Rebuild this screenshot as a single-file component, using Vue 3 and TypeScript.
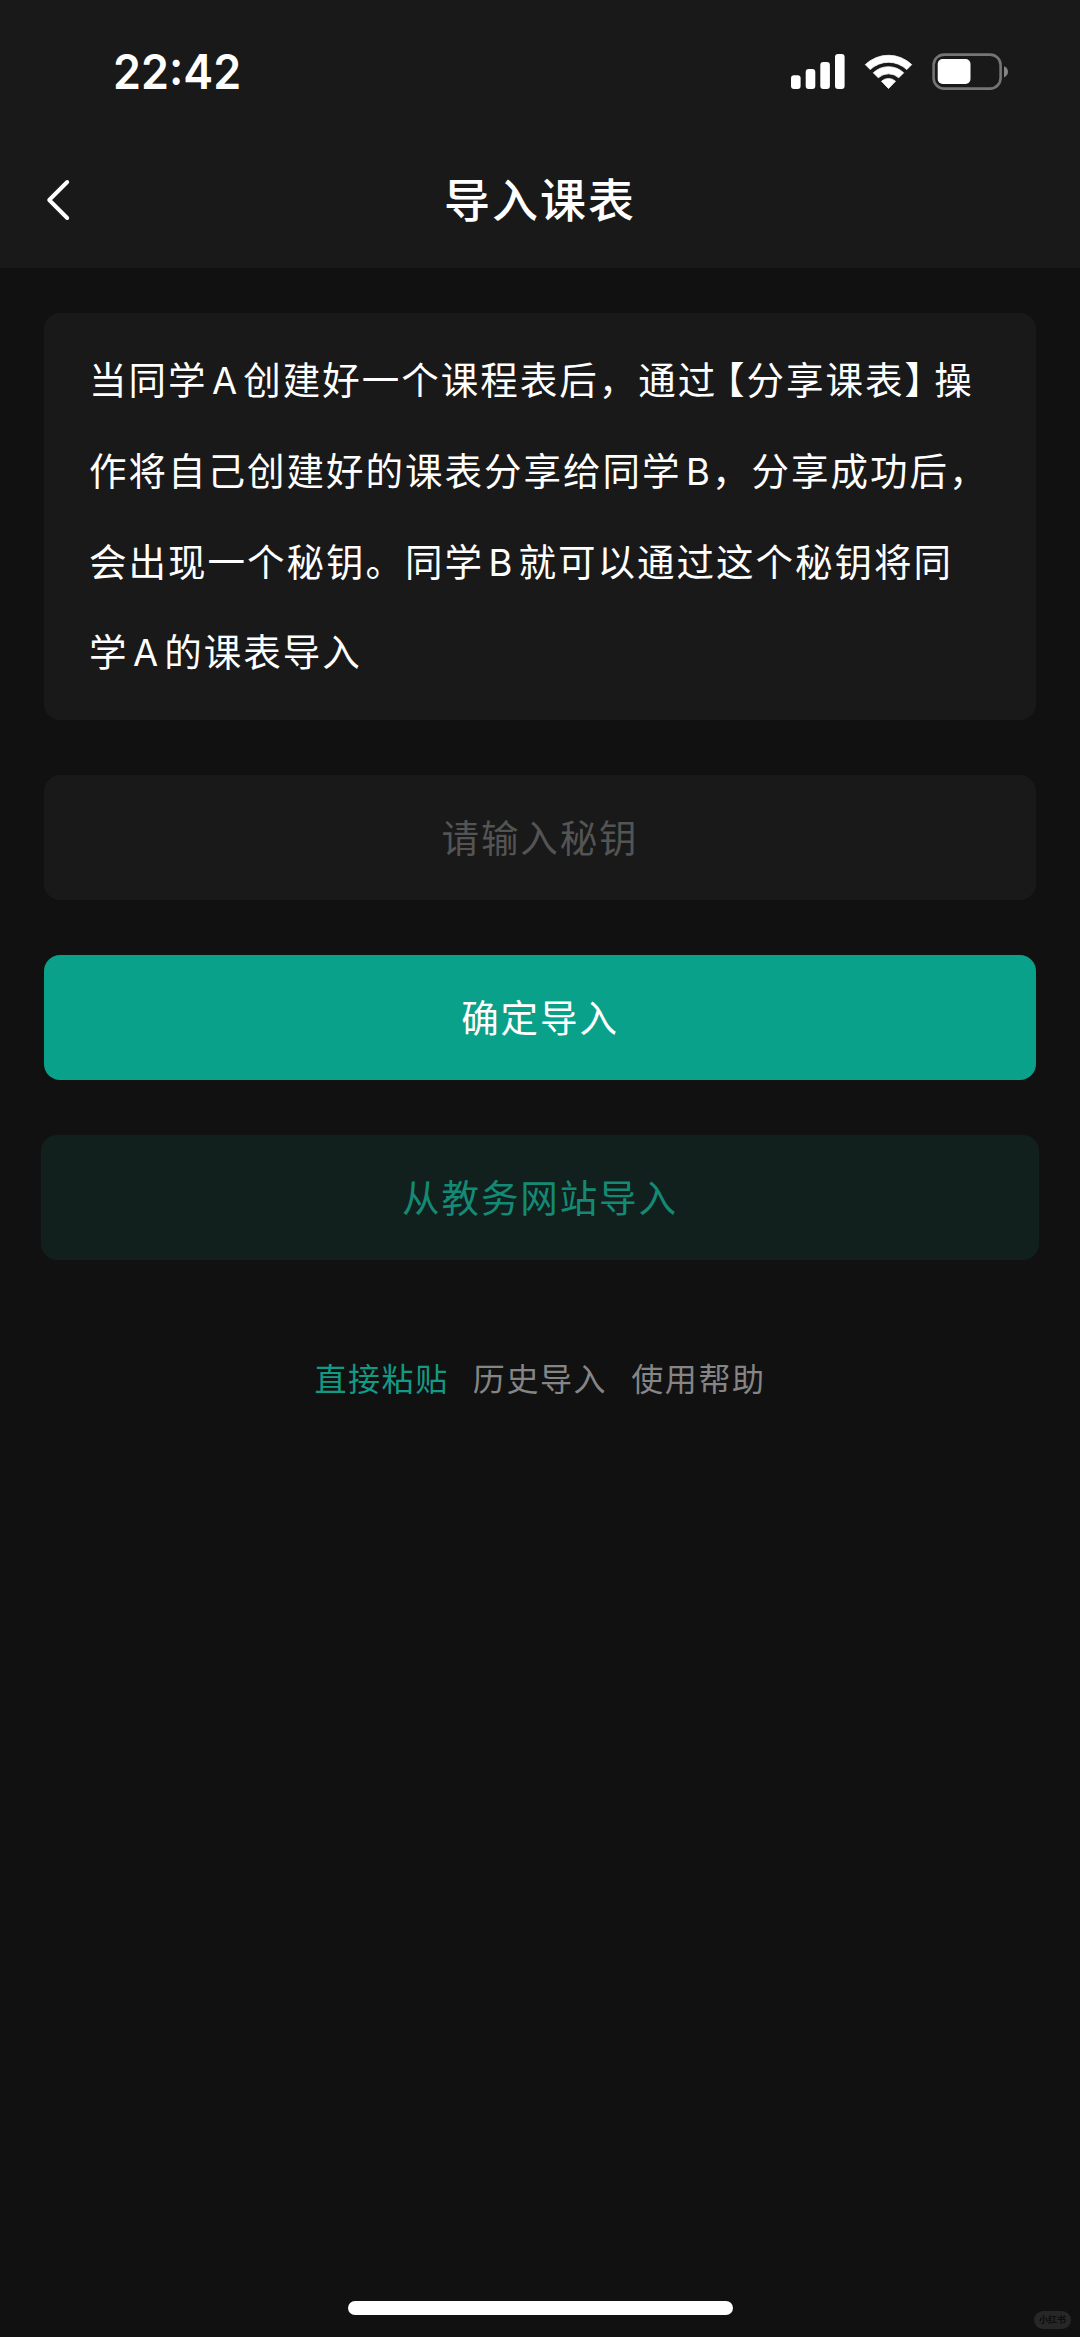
<script setup lang="ts">
import { ref } from 'vue'

interface QuickLink {
  label: string
  active: boolean
}

const secret = ref<string>('')

const links: QuickLink[] = [
  { label: '直接粘贴', active: true },
  { label: '历史导入', active: false },
  { label: '使用帮助', active: false },
]
</script>

<template>
  <div class="page">
    <header class="top">
      <div class="status">
        <span class="time">22<span class="colon">:</span>42</span>
        <svg class="signals" width="220" height="40" viewBox="0 0 220 40">
          <g fill="#fff">
            <rect x="2" y="23.3" width="9.6" height="13.7" rx="3" />
            <rect x="16.7" y="17" width="9.6" height="20" rx="3" />
            <rect x="31.3" y="10" width="9.6" height="27" rx="3" />
            <rect x="46" y="2" width="9.6" height="35" rx="3" />
            <path d="M76.3 12.6a33.5 33.5 0 0 1 46.4 0l-4.9 5a26.5 26.5 0 0 0-36.6 0z" stroke="#fff" stroke-width="0.8" stroke-linejoin="round" />
            <path d="M84.3 20.8a22 22 0 0 1 30.4 0l-5 5a15 15 0 0 0-20.4 0z" stroke="#fff" stroke-width="0.8" stroke-linejoin="round" />
            <path d="M92.5 29.2a10.4 10.4 0 0 1 14 0L99.5 36.6z" stroke="#fff" stroke-width="0.8" stroke-linejoin="round" />
            <rect x="148.7" y="7" width="32.8" height="25" rx="5" />
          </g>
          <rect x="144.6" y="2.6" width="67" height="34" rx="10.5" fill="none" stroke="#757575" stroke-width="2.6" />
          <path d="M215 14.2c2.7 1.2 4 3.1 4 5.6s-1.3 4.4-4 5.6z" fill="#858585" />
        </svg>
      </div>
      <div class="nav">
        <svg class="back" width="30" height="46" viewBox="0 0 30 46">
          <path d="M24.2 5L6.2 23l18 18" fill="none" stroke="#fff" stroke-width="3.9" stroke-linecap="round" stroke-linejoin="round" />
        </svg>
        <h1 class="title">导入课表</h1>
      </div>
    </header>

    <main class="body">
      <p class="tips">
        <span class="line">当同学<i>A</i>创建好一个课程表后，通过<b class="open">【</b>分享课表<b class="close">】</b>操</span>
        <span class="line">作将自己创建好的课表分享给同学<i class="tight">B</i>，分享成功后，</span>
        <span class="line">会出现一个秘钥。同学<i>B</i>就可以通过这个秘钥将同</span>
        <span class="line">学<i>A</i>的课表导入</span>
      </p>
      <input v-model="secret" class="field" type="text" placeholder="请输入秘钥" />
      <button class="btn primary" type="button">确定导入</button>
      <button class="btn soft" type="button">从教务网站导入</button>
      <nav class="links">
        <a v-for="link in links" :key="link.label" :class="{ active: link.active }">{{ link.label }}</a>
      </nav>
    </main>

    <div class="home"></div>
    <span class="mark">小红书</span>
  </div>
</template>

<style>
body {
  margin: 0;
  background: #111;
}
</style>

<style scoped>
.page {
  position: relative;
  box-sizing: border-box;
  display: flex;
  flex-direction: column;
  width: 1080px;
  height: 2337px;
  overflow: hidden;
  background: #111;
  color: #fff;
  font-family: Inter, "Noto Sans CJK SC", sans-serif;
}
.top {
  height: 268px;
  flex: none;
  background: #191919;
}
.status {
  box-sizing: border-box;
  display: flex;
  justify-content: space-between;
  height: 132px;
  padding: 43px 71px 0 113px;
}
.time {
  height: 58px;
  font-size: 48px;
  font-weight: 600;
  line-height: 58px;
  transform: scaleX(0.935);
  transform-origin: left;
}
.colon {
  display: inline-block;
  transform: translateY(-4px);
}
.signals {
  margin-top: 9px;
}
.nav {
  position: relative;
  display: flex;
  align-items: center;
  justify-content: center;
  height: 136px;
}
.back {
  position: absolute;
  left: 43px;
  top: 45px;
}
.title {
  margin: 0;
  font-size: 46px;
  font-weight: 500;
  line-height: 68px;
  letter-spacing: 2px;
}
.body {
  display: flex;
  flex-direction: column;
  padding: 45px 44px 0;
}
.tips {
  box-sizing: border-box;
  height: 407px;
  margin: 0;
  padding: 23px 0 0 45px;
  border-radius: 16px;
  background: #191919;
}
.line {
  display: block;
  font-size: 37.5px;
  font-weight: 400;
  line-height: 90.8px;
  letter-spacing: 2px;
  white-space: nowrap;
}
.line i {
  margin: 0 4px 0 4.6px;
  font-size: 36.5px;
  font-style: normal;
  font-weight: 400;
  line-height: 1;
}
.line i.tight {
  margin-right: 0;
}
.line b {
  font-weight: 400;
  font-feature-settings: "halt";
}
.open {
  margin-left: 8.5px;
}
.close {
  margin-right: 9px;
}
.field,
.btn {
  box-sizing: border-box;
  width: 100%;
  height: 125px;
  border: 0;
  border-radius: 16px;
  outline: 0;
  font-family: inherit;
  font-size: 37.5px;
  font-weight: 400;
  letter-spacing: 1.9px;
  text-align: center;
}
.field {
  margin-top: 55px;
  padding: 2px 0 0;
  background: #191919;
  color: #fff;
}
.field::placeholder {
  color: #545454;
  opacity: 1;
}
.btn {
  padding: 0 0 4px;
}
.primary {
  margin-top: 55px;
  background: #0aa18b;
  color: #fff;
}
.soft {
  width: 998px;
  margin: 55px -3px 0;
  background: #12201d;
  color: #148a76;
}
.links {
  display: flex;
  justify-content: center;
  gap: 24px;
  margin-top: 96px;
  color: #858585;
  font-size: 32px;
  font-weight: 400;
  line-height: 48px;
  letter-spacing: 1.6px;
}
.active {
  color: #129a84;
}
.home {
  width: 385px;
  height: 14px;
  margin: auto auto 22px 348px;
  border-radius: 7px;
  background: #fff;
}
.mark {
  position: absolute;
  right: 9px;
  bottom: 8px;
  width: 37px;
  height: 18px;
  border-radius: 9px;
  background: #272727;
  color: #0d0d0d;
  font-size: 9px;
  font-weight: 700;
  line-height: 18px;
  text-align: center;
}
</style>
